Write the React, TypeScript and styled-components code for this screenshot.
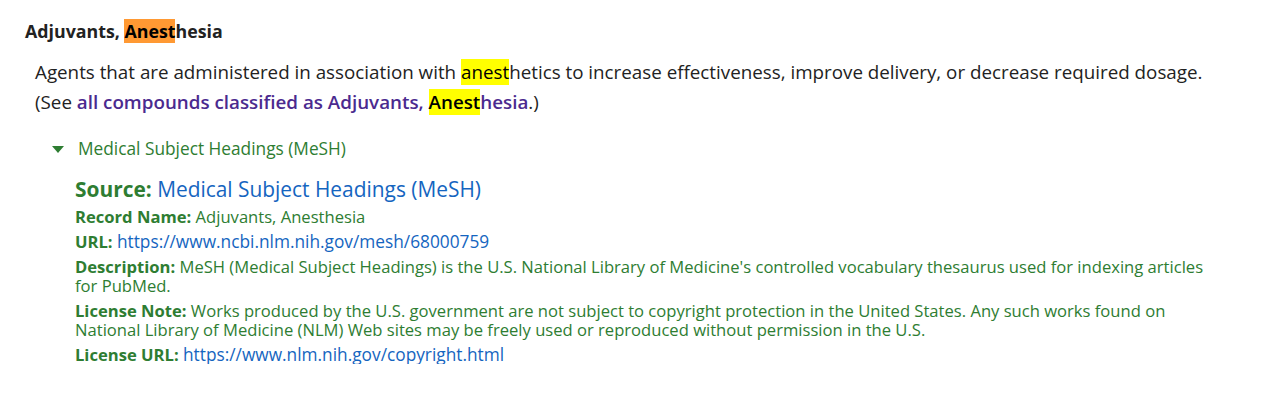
import React from "react";
import styled, { createGlobalStyle } from "styled-components";

const Global = createGlobalStyle`
  html, body { margin: 0; padding: 0; background: #fff; }
  body { font-family: "Open Sans", "Noto Sans", sans-serif; color: #222; }
`;

const Page = styled.div`
  padding: 18px 25px 0 25px;
  width: 1200px;
`;

const Title = styled.h3`
  margin: 0;
  font-size: 17.8px;
  font-weight: 700;
  line-height: 26px;
  color: #222;
`;

const Mark = styled.mark<{ $tone: "orange" | "yellow" }>`
  background: ${(p) => (p.$tone === "orange" ? "#ff9933" : "#ffff00")};
  color: #000;
  padding: 0;
`;

const Description = styled.p`
  margin: 13px 0 0 10px;
  font-size: 18.8px;
  line-height: 30px;
  color: #222;
  white-space: nowrap;
`;

const Link = styled.a`
  color: #4b2a8f;
  font-weight: 600;
  text-decoration: none;
`;

const Section = styled.div`
  margin-top: 20px;
  padding-left: 27px;
`;

const Toggle = styled.div`
  display: flex;
  align-items: center;
  gap: 14px;
  color: #2e7d32;
  font-size: 17.3px;
  font-weight: 500;
  line-height: 24px;
`;

const Caret = styled.svg`
  width: 12px;
  height: 7px;
  flex: none;
`;

const Details = styled.div`
  margin-top: 14px;
  padding-left: 23px;
  color: #2e7d32;
  width: 1150px;
`;

const SourceLine = styled.div`
  font-size: 20.9px;
  line-height: 28px;
  font-weight: 700;
`;

const SourceLink = styled.a`
  color: #1565c0;
  font-weight: 400;
  text-decoration: none;
`;

const Row = styled.div<{ $first?: boolean }>`
  font-size: 16.6px;
  line-height: 19px;
  margin-top: ${(p) => (p.$first ? "4px" : "6px")};
`;

const Label = styled.b`
  font-weight: 700;
`;

const RowLink = styled.a`
  color: #1565c0;
  font-size: 17.3px;
  text-decoration: none;
`;

export default function App() {
  return (
    <>
      <Global />
      <Page>
        <Title>
          Adjuvants, <Mark $tone="orange">Anest</Mark>hesia
        </Title>
        <Description>
          Agents that are administered in association with{" "}
          <Mark $tone="yellow">anest</Mark>hetics to increase effectiveness,
          improve delivery, or decrease required dosage.
          <br />
          (See{" "}
          <Link href="#">
            all compounds classified as Adjuvants,{" "}
            <Mark $tone="yellow">Anest</Mark>hesia
          </Link>
          .)
        </Description>
        <Section>
          <Toggle>
            <Caret viewBox="0 0 12 7">
              <path d="M0 0 L12 0 L6 7 Z" fill="#2e7d32" />
            </Caret>
            Medical Subject Headings (MeSH)
          </Toggle>
          <Details>
            <SourceLine>
              Source: <SourceLink href="#">Medical Subject Headings (MeSH)</SourceLink>
            </SourceLine>
            <Row $first>
              <Label>Record Name:</Label> Adjuvants, Anesthesia
            </Row>
            <Row>
              <Label>URL:</Label>{" "}
              <RowLink href="#">https://www.ncbi.nlm.nih.gov/mesh/68000759</RowLink>
            </Row>
            <Row>
              <Label>Description:</Label> MeSH (Medical Subject Headings) is the U.S.
              National Library of Medicine's controlled vocabulary thesaurus used for
              indexing articles
              <br />
              for PubMed.
            </Row>
            <Row>
              <Label>License Note:</Label> Works produced by the U.S. government are not
              subject to copyright protection in the United States. Any such works found
              on
              <br />
              National Library of Medicine (NLM) Web sites may be freely used or
              reproduced without permission in the U.S.
            </Row>
            <Row>
              <Label>License URL:</Label>{" "}
              <RowLink href="#">https://www.nlm.nih.gov/copyright.html</RowLink>
            </Row>
          </Details>
        </Section>
      </Page>
    </>
  );
}
